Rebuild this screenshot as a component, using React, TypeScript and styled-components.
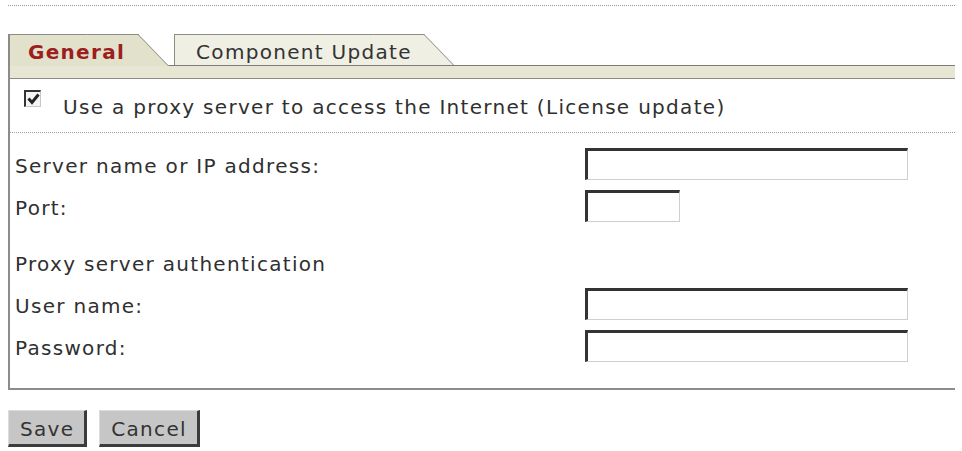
import styled, { createGlobalStyle } from 'styled-components'

const GlobalStyle = createGlobalStyle`
	body {
		margin: 0;
		background: #ffffff;
		font-family: 'DejaVu Sans', Verdana, sans-serif;
		color: #303030;
	}
`

const fields = [
	{ label: 'Server name or IP address:', width: 323 },
	{ label: 'Port:', width: 95 },
]

const authFields = [
	{ label: 'User name:', width: 323 },
	{ label: 'Password:', width: 323 },
]

export default function App() {
	return (
		<Page>
			<GlobalStyle />
			<TopRule />
			<TabBar>
				<Tab $active>General</Tab>
				<Tab>Component Update</Tab>
			</TabBar>
			<Panel>
				<Strip />
				<CheckRow>
					<CheckBox>
						<svg width="13" height="12" viewBox="0 0 13 12">
							<path d="M1.5 5.5 L5 9.5 L11.5 1.5" fill="none" stroke="#222222" strokeWidth="3" />
						</svg>
					</CheckBox>
					<span>Use a proxy server to access the Internet (License update)</span>
				</CheckRow>
				<FieldGrid>
					{fields.map((f) => (
						<Field key={f.label}>
							<Label>{f.label}</Label>
							<TextInput $width={f.width} />
						</Field>
					))}
					<Heading>Proxy server authentication</Heading>
					{authFields.map((f) => (
						<Field key={f.label}>
							<Label>{f.label}</Label>
							<TextInput $width={f.width} type={f.label === 'Password:' ? 'password' : 'text'} />
						</Field>
					))}
				</FieldGrid>
			</Panel>
			<Actions>
				<Button>Save</Button>
				<Button>Cancel</Button>
			</Actions>
		</Page>
	)
}

const Page = styled.main`
	width: 947px;
	padding: 5px 0 0 8px;
	font-size: 20px;
	letter-spacing: 1.3px;
`

const TopRule = styled.div`
	border-top: 1px dotted #9a9a9a;
	margin-bottom: 28px;
`

const TabBar = styled.div`
	display: flex;
	gap: 5px;
	height: 31px;
	position: relative;
	z-index: 2;
`

const Tab = styled.div<{ $active?: boolean }>`
	position: relative;
	display: flex;
	align-items: center;
	height: ${({ $active }) => ($active ? '32px' : '31px')};
	padding: 4px ${({ $active }) => ($active ? '44px' : '42px')} 0 ${({ $active }) => ($active ? '20px' : '22px')};
	box-sizing: border-box;
	font-weight: ${({ $active }) => ($active ? 700 : 400)};
	color: ${({ $active }) => ($active ? '#9c1e1e' : '#333333')};
	z-index: ${({ $active }) => ($active ? 2 : 1)};

	&::before,
	&::after {
		content: '';
		position: absolute;
		top: 0;
		bottom: 0;
		background: ${({ $active }) => ($active ? '#e2e2cc' : '#efefe4')};
		border-top: 1px solid #8c8c84;
		z-index: -1;
	}
	&::before {
		left: 0;
		right: 30px;
		border-left: ${({ $active }) => ($active ? '2px' : '1px')} solid #8c8c84;
	}
	&::after {
		right: 0;
		width: 50px;
		border-right: 1px solid #8c8c84;
		transform: skewX(44deg);
		transform-origin: bottom left;
	}
`

const Panel = styled.section`
	border-left: 2px solid #8c8c8c;
	border-bottom: 2px solid #8c8c8c;
	padding-bottom: 27px;
`

const Strip = styled.div`
	height: 12px;
	background: #e6e6d2;
	border-top: 1px solid #7c7c78;
	border-bottom: 1px solid #8c8c84;
`

const CheckRow = styled.label`
	display: flex;
	align-items: flex-start;
	gap: 22px;
	height: 54px;
	padding: 11px 0 0 14px;
	box-sizing: border-box;
	line-height: 34px;
	border-bottom: 1px dotted #9a9a9a;
`

const CheckBox = styled.span`
	display: grid;
	place-items: center;
	width: 17px;
	height: 17px;
	box-sizing: border-box;
	border-top: 2px solid #333333;
	border-left: 2px solid #333333;
	border-right: 1px solid #c8c8c8;
	border-bottom: 1px solid #c8c8c8;
	background: #f4f4f4;
`

const FieldGrid = styled.div`
	display: flex;
	flex-direction: column;
	gap: 11px;
	padding: 15px 0 0 5px;
`

const Field = styled.div`
	display: grid;
	grid-template-columns: 570px auto;
	align-items: center;
	height: 31px;
`

const Label = styled.span`
	line-height: 24px;
	padding-top: 4px;
`

const Heading = styled.div`
	height: 45px;
	padding-top: 20px;
	box-sizing: border-box;
	line-height: 24px;
`

const TextInput = styled.input<{ $width: number }>`
	width: ${({ $width }) => $width}px;
	height: 32px;
	box-sizing: border-box;
	border-top: 3px solid #333333;
	border-left: 3px solid #333333;
	border-right: 1px solid #cfcfcf;
	border-bottom: 1px solid #cfcfcf;
	background: #ffffff;
	outline: none;
	font: inherit;
`

const Actions = styled.div`
	display: flex;
	gap: 12px;
	margin-top: 20px;
`

const Button = styled.button`
	height: 37px;
	padding: 2px 10px 0 11px;
	font: inherit;
	letter-spacing: 1.3px;
	color: #333333;
	background: #c6c6c6;
	border-top: 1px solid #dcdcdc;
	border-left: 1px solid #dcdcdc;
	border-right: 3px solid #3c3c3c;
	border-bottom: 3px solid #3c3c3c;
`
